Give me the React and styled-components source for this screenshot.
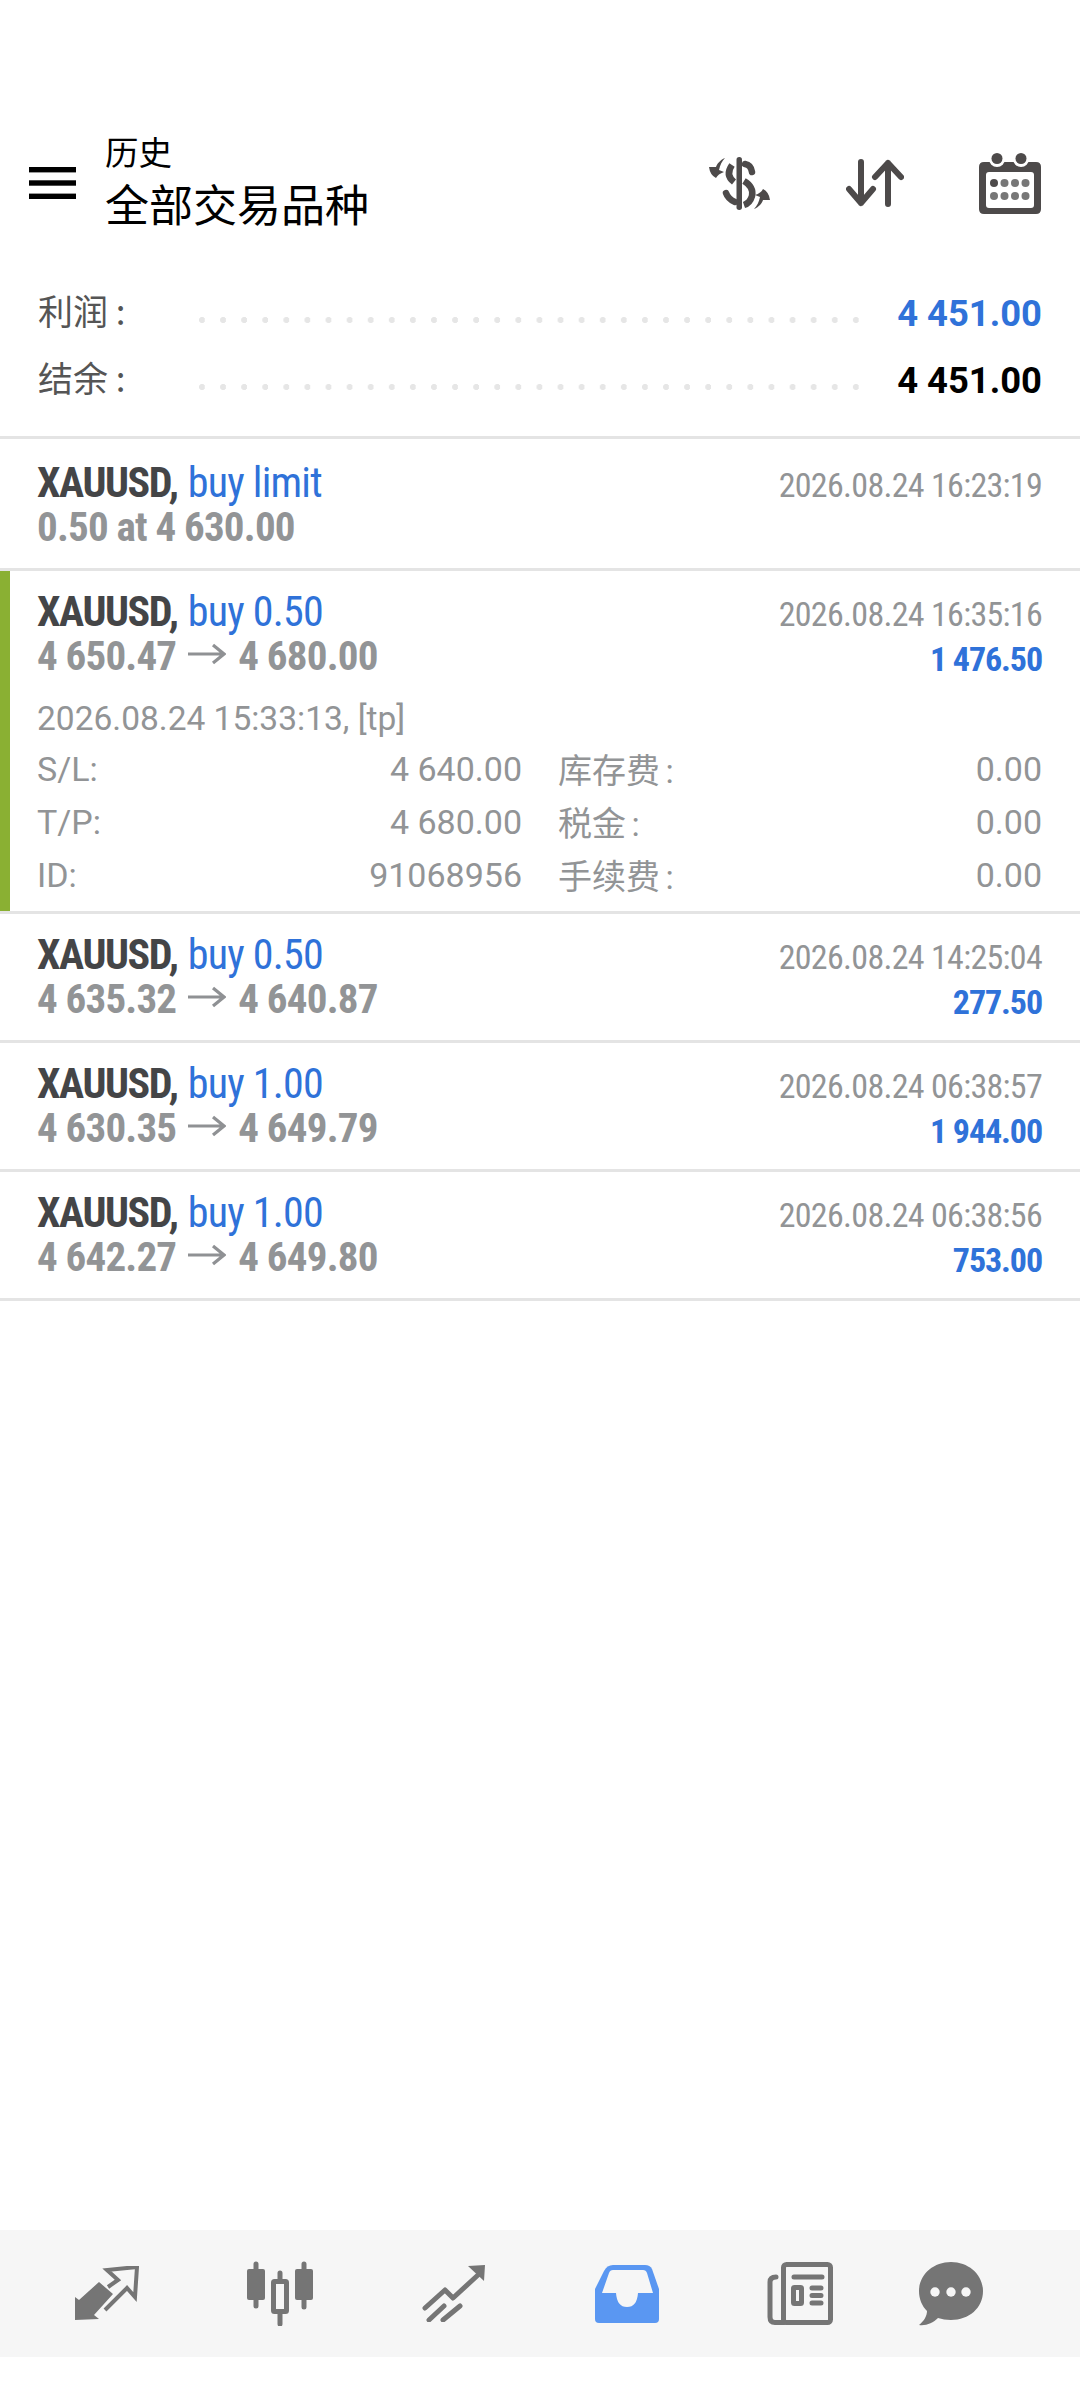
import React from 'react';
import styled, { createGlobalStyle } from 'styled-components';

const GlobalStyle = createGlobalStyle`
  html, body { margin: 0; padding: 0; background: #fff; }
  * { box-sizing: border-box; }
  body { font-family: Roboto, "Noto Sans CJK SC", sans-serif; }
`;

const BLUE = '#2f72d9';
const GRAY = '#929496';

const Page = styled.div`
  width: 1080px;
  height: 2400px;
  display: flex;
  flex-direction: column;
  background: #fff;
  overflow: hidden;
`;
const Header = styled.header`
  display: flex;
  align-items: center;
  height: 120px;
  margin-top: 124px;
  padding: 0 39px 0 29px;
`;
const BurgerIcon = styled.svg`
  margin: -2px 29px 0 0;
`;
const Titles = styled.div`
  flex: 1;
  margin-top: -6px;
  font-family: "Noto Sans CJK SC", sans-serif;
  color: #000;
`;
const Subtitle = styled.div`
  font-size: 33.5px;
  line-height: 40px;
`;
const Title = styled.div`
  font-size: 44px;
  line-height: 58px;
  margin-top: 3px;
`;
const Tools = styled.div`
  display: flex;
  align-items: center;
  gap: 75px;
  margin-top: -2px;
`;
const Summary = styled.section`
  padding: 36px 38px 0 38px;
  height: 195px;
  border-bottom: 3px solid #e4e4e4;
`;
const SummaryRow = styled.div`
  display: flex;
  align-items: center;
  height: 67px;
`;
const SummaryLabel = styled.div`
  width: 161px;
  margin-top: -9px;
  font-family: "Noto Sans CJK SC", sans-serif;
  font-size: 35px;
  color: #555;
`;
const Dots = styled.div`
  width: 660px;
  height: 8px;
  margin-top: 13px;
  background-image: radial-gradient(circle at 3px 4px, #e6e6e6 2.8px, transparent 3.2px);
  background-size: 21.1px 8px;
`;
const SummaryValue = styled.div`
  flex: 1;
  text-align: right;
  font-size: 36.4px;
  font-weight: 700;
  color: ${(props) => props.$color};
`;
const Row = styled.article`
  display: flex;
  flex-direction: column;
  height: ${(props) => (props.$open ? '343px' : '129px')};
  padding: 18px 38px 0 37px;
  border-bottom: 3px solid #e4e4e4;
  box-shadow: ${(props) => (props.$open ? 'inset 10px 0 0 #8ab033' : 'none')};
  &:first-of-type {
    height: 132px;
    padding-top: 21px;
  }
`;
const RowMain = styled.div`
  display: flex;
  justify-content: space-between;
`;
const Condensed = styled.div`
  font-stretch: 75%;
  font-family: "Roboto Condensed", "Liberation Sans Narrow", Roboto, sans-serif;
`;
const Pair = styled(Condensed)`
  font-size: 42px;
  line-height: 45px;
  font-weight: 700;
  letter-spacing: -1.4px;
  color: #444547;
  white-space: pre;
`;
const SideLabel = styled.span`
  margin-left: 2px;
  font-weight: 400;
  letter-spacing: -0.8px;
  color: ${BLUE};
`;
const Prices = styled(Condensed)`
  font-size: 41px;
  line-height: 45px;
  font-weight: 700;
  letter-spacing: -0.8px;
  color: ${GRAY};
  white-space: pre;
`;
const PriceArrow = styled.svg`
  margin: 0 12px;
  vertical-align: 5px;
`;
const Side = styled(Condensed)`
  padding-top: 3px;
  text-align: right;
`;
const CloseTime = styled.div`
  font-size: 34px;
  line-height: 45px;
  letter-spacing: -0.7px;
  color: ${GRAY};
`;
const Profit = styled.div`
  font-size: 34px;
  line-height: 45px;
  font-weight: 700;
  letter-spacing: -1.1px;
  color: ${BLUE};
`;
const OpenTime = styled.div`
  font-size: 33.5px;
  line-height: 38px;
  margin-top: 18px;
  color: ${GRAY};
`;
const Details = styled.div`
  display: grid;
  grid-template-columns: 485px 1fr;
  column-gap: 36px;
  grid-auto-rows: 53px;
  margin-top: 4px;
  font-size: 34px;
  color: ${GRAY};
`;
const Detail = styled.div`
  display: flex;
  justify-content: space-between;
  align-items: center;
`;
const DetailLabel = styled.span`
  word-spacing: -3px;
`;
const Spacer = styled.div`
  flex: 1;
`;
const BottomBar = styled.nav`
  height: 127px;
  margin-bottom: 43px;
  background: #f6f6f6;
  display: grid;
  grid-template-columns: repeat(5, 173.4px) 128px;
  padding-left: 20px;
  align-items: center;
`;
const NavItem = styled.div`
  display: flex;
  justify-content: center;
  align-items: center;
`;

const ARROW_SWOOSH = 'M17 1 C12 3 9 7 8 10 L1 10 Q2 18 8 21 Q10 17 16 15 L11 13 C12 8 14 4 17 1 Z';

const Burger = () => (
  <BurgerIcon width="47" height="32" viewBox="0 0 47 32" fill="#000">
    <rect y="0" width="47" height="5.4" />
    <rect y="13.3" width="47" height="5.4" />
    <rect y="26.6" width="47" height="5.4" />
  </BurgerIcon>
);

const LongArrow = () => (
  <PriceArrow width="38" height="22" viewBox="0 0 38 22" fill="none" stroke="#8f9194" strokeWidth="3.2">
    <path d="M0 11 H36 M25 2 L36 11 L25 20" />
  </PriceArrow>
);

const DollarIcon = () => (
  <svg width="63" height="53" viewBox="0 0 63 53" fill="none">
    <rect x="28.5" y="0" width="5.5" height="53" rx="2.7" fill="#4d4a4a" />
    <g stroke="#4d4a4a" strokeWidth="6.5">
      <path d="M37 7 Q43 8 44 15" strokeLinecap="round" />
      <path d="M24 8 Q17 18 26 25" />
      <path d="M36 24 Q46 30 44 39 Q42 46 36 48" />
      <path d="M18 36 Q20 42 27 45" strokeLinecap="round" />
    </g>
    <path d={ARROW_SWOOSH} fill="#4d4a4a" />
    <path d={ARROW_SWOOSH} fill="#4d4a4a" transform="rotate(180 31.5 26.5)" />
  </svg>
);

const SwapIcon = () => (
  <svg width="58" height="48" viewBox="0 0 58 48" fill="none" stroke="#4d4a4a" strokeWidth="6" strokeLinecap="round" strokeLinejoin="round">
    <path d="M15 3 V44 M3 30 L15 44 L27 30" />
    <path d="M42 45 V4 M29 18 L42 4 L55 18" />
  </svg>
);

const CalendarIcon = () => (
  <svg width="62" height="61" viewBox="0 0 62 61">
    <path d="M5 9 H57 Q62 9 62 14 V56 Q62 61 57 61 H5 Q0 61 0 56 V14 Q0 9 5 9 Z" fill="#4d4a4a" />
    <rect x="7" y="19" width="48" height="36" rx="3" fill="#fff" />
    <circle cx="18" cy="6" r="8" fill="#fff" />
    <circle cx="42" cy="6" r="8" fill="#fff" />
    <circle cx="18" cy="5.5" r="5.5" fill="#4d4a4a" />
    <circle cx="42" cy="5.5" r="5.5" fill="#4d4a4a" />
    {[15, 25.5, 36, 46.5].map((x, i) => (
      <React.Fragment key={x}>
        <circle cx={x} cy="30" r="4" fill={i === 0 ? '#4d4a4a' : '#777'} />
        <circle cx={x} cy="43" r="4" fill="#777" />
      </React.Fragment>
    ))}
  </svg>
);

const TradeIcon = () => (
  <svg width="64" height="55" viewBox="0 0 64 55" fill="none">
    <path d="M0 31 L4 34 L24 16 L38 28 L19 49 L24 53 L0 54 Z" fill="#757575" />
    <path d="M33 21 L43 14 L32 4 L62 1 L60 31 L52 22 L30 44" stroke="#757575" strokeWidth="4" />
  </svg>
);

const CandlesIcon = () => (
  <svg width="66" height="65" viewBox="0 0 66 65" fill="none">
    <g stroke="#757575" strokeWidth="5" strokeLinecap="round">
      <path d="M9 3 V45 M33 12 V63 M57 3 V46" />
    </g>
    <rect x="0" y="8" width="18" height="31" rx="2" fill="#757575" />
    <rect x="48" y="8" width="18" height="31" rx="2" fill="#757575" />
    <rect x="26.5" y="20.5" width="13" height="30" rx="1" fill="#f6f6f6" stroke="#757575" strokeWidth="5" />
  </svg>
);

const ChartIcon = () => (
  <svg width="63" height="57" viewBox="0 0 63 57" fill="none">
    <g stroke="#757575" strokeWidth="5" strokeLinecap="round" strokeLinejoin="round">
      <path d="M3 43 L23 25 L31 33 L56 10" />
      <path d="M7 55 L22 41 M21 55 L38 41" />
    </g>
    <path d="M46 1 L63 0 L62 16 Z" fill="#757575" />
  </svg>
);

const InboxIcon = () => (
  <svg width="64" height="58" viewBox="0 0 64 58">
    <path d="M18 0 H50 Q55 0 57 4 L64 24 V54 Q64 58 60 58 H4 Q0 58 0 54 V24 L9 6 Q12 0 18 0 Z" fill="#5a97f2" />
    <path d="M18 5 H48 Q51 5 52 8 L58 28 H43 Q42 42 32 42 Q22 42 21 28 H7 L14 8 Q15 5 18 5 Z" fill="#f6f6f6" />
  </svg>
);

const NewsIcon = () => (
  <svg width="66" height="63" viewBox="0 0 66 63" fill="none">
    <g stroke="#757575" strokeWidth="5" strokeLinecap="round" strokeLinejoin="round">
      <rect x="16.5" y="2.5" width="47" height="58" rx="3" />
      <path d="M9 15 Q3 15 3 20 V55 Q3 60.5 8 60.5 H17" />
      <path d="M27 15 H55 M45 26 H54 M45 33.5 H54 M45 41 H54" />
    </g>
    <rect x="26.5" y="25.5" width="8" height="16" rx="1" stroke="#757575" strokeWidth="5" />
  </svg>
);

const ChatIcon = () => (
  <svg width="64" height="64" viewBox="0 0 64 64">
    <path d="M32 0 C50 0 64 13 64 29 C64 46 50 58 32 58 C27 58 23 57 19 56 C14 61 7 64 0 63 C5 59 8 54 8 49 C3 44 0 37 0 29 C0 13 14 0 32 0 Z" fill="#757575" />
    <circle cx="16" cy="30" r="4.7" fill="#f6f6f6" />
    <circle cx="32" cy="30" r="4.7" fill="#f6f6f6" />
    <circle cx="47" cy="30" r="4.7" fill="#f6f6f6" />
  </svg>
);

const trades = [
  { side: 'buy limit', prices: ['0.50 at 4 630.00'], time: '2026.08.24 16:23:19' },
  { side: 'buy 0.50', prices: ['4 650.47', '4 680.00'], time: '2026.08.24 16:35:16', profit: '1 476.50', open: true },
  { side: 'buy 0.50', prices: ['4 635.32', '4 640.87'], time: '2026.08.24 14:25:04', profit: '277.50' },
  { side: 'buy 1.00', prices: ['4 630.35', '4 649.79'], time: '2026.08.24 06:38:57', profit: '1 944.00' },
  { side: 'buy 1.00', prices: ['4 642.27', '4 649.80'], time: '2026.08.24 06:38:56', profit: '753.00' },
];

const TradeRow = ({ trade }) => (
  <Row $open={trade.open}>
    <RowMain>
      <div>
        <Pair>
          XAUUSD, <SideLabel>{trade.side}</SideLabel>
        </Pair>
        <Prices>
          {trade.prices[0]}
          {trade.prices[1] && (
            <>
              <LongArrow />
              {trade.prices[1]}
            </>
          )}
        </Prices>
      </div>
      <Side>
        <CloseTime>{trade.time}</CloseTime>
        {trade.profit && <Profit>{trade.profit}</Profit>}
      </Side>
    </RowMain>
    {trade.open && (
      <>
        <OpenTime>2026.08.24 15:33:13, [tp]</OpenTime>
        <Details>
          <Detail><span>S/L:</span><span>4 640.00</span></Detail>
          <Detail><DetailLabel>库存费 :</DetailLabel><span>0.00</span></Detail>
          <Detail><span>T/P:</span><span>4 680.00</span></Detail>
          <Detail><DetailLabel>税金 :</DetailLabel><span>0.00</span></Detail>
          <Detail><span>ID:</span><span>91068956</span></Detail>
          <Detail><DetailLabel>手续费 :</DetailLabel><span>0.00</span></Detail>
        </Details>
      </>
    )}
  </Row>
);

export default function App() {
  return (
    <Page>
      <GlobalStyle />
      <Header>
        <Burger />
        <Titles>
          <Subtitle>历史</Subtitle>
          <Title>全部交易品种</Title>
        </Titles>
        <Tools>
          <DollarIcon />
          <SwapIcon />
          <CalendarIcon />
        </Tools>
      </Header>
      <Summary>
        <SummaryRow>
          <SummaryLabel>利润 :</SummaryLabel>
          <Dots />
          <SummaryValue $color={BLUE}>4 451.00</SummaryValue>
        </SummaryRow>
        <SummaryRow>
          <SummaryLabel>结余 :</SummaryLabel>
          <Dots />
          <SummaryValue $color="#000">4 451.00</SummaryValue>
        </SummaryRow>
      </Summary>
      {trades.map((trade) => (
        <TradeRow key={trade.time} trade={trade} />
      ))}
      <Spacer />
      <BottomBar>
        <NavItem><TradeIcon /></NavItem>
        <NavItem><CandlesIcon /></NavItem>
        <NavItem><ChartIcon /></NavItem>
        <NavItem><InboxIcon /></NavItem>
        <NavItem><NewsIcon /></NavItem>
        <NavItem><ChatIcon /></NavItem>
      </BottomBar>
    </Page>
  );
}
